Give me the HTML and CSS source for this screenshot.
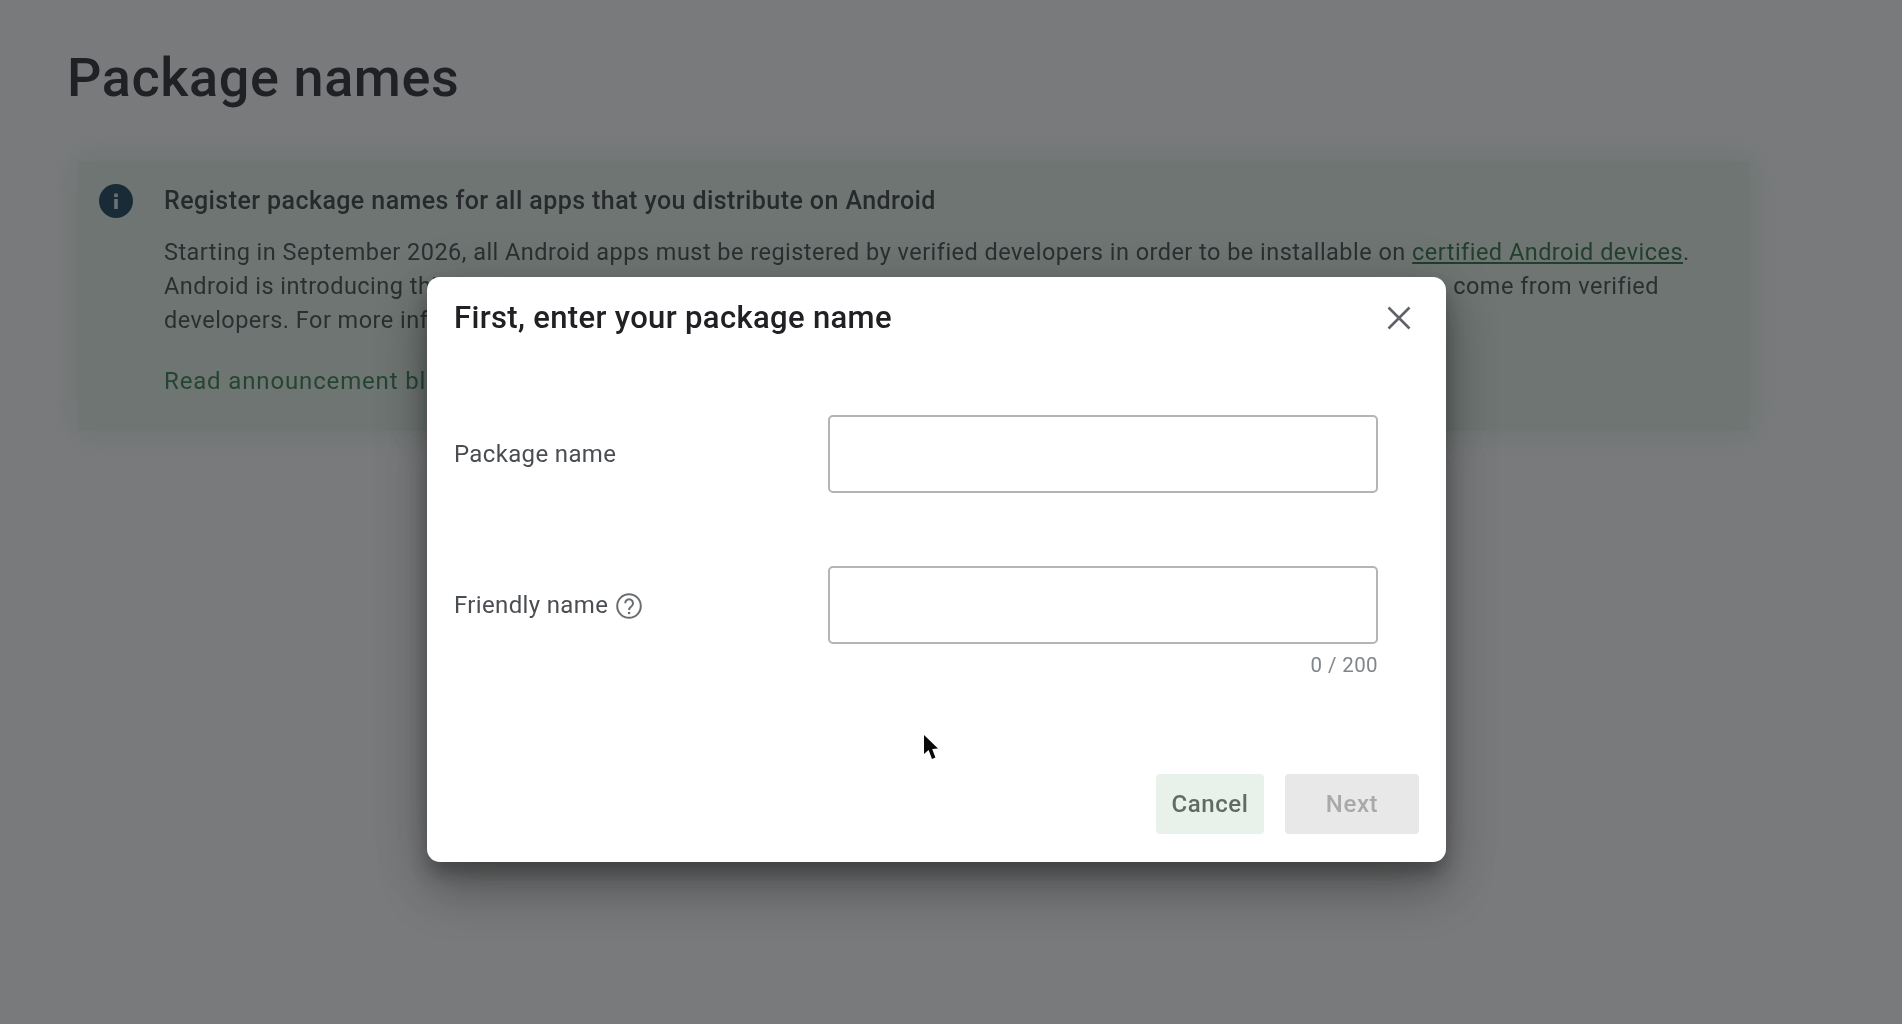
FILE: index.html
```html
<!DOCTYPE html>
<html lang="en">
<head>
<meta charset="utf-8">
<title>Package names</title>
<link rel="stylesheet" href="styles.css">
</head>
<body>
<div class="screen">
  <main class="page">
    <h1 class="page-title">Package names</h1>
    <section class="banner">
      <svg class="banner-icon" viewBox="0 0 34 34" aria-hidden="true">
        <circle cx="17" cy="17" r="17" fill="#0f3a52"/>
        <rect x="15.2" y="15" width="3.6" height="10" fill="#dfe8ea"/>
        <rect x="15.2" y="9.5" width="3.6" height="3.6" fill="#dfe8ea"/>
      </svg>
      <div class="banner-body">
        <h2 class="banner-title">Register package names for all apps that you distribute on Android</h2>
        <p class="banner-text">Starting in September 2026, all Android apps must be registered by verified developers in order to be installable on <a class="banner-link" href="#">certified Android devices</a>.</p>
        <p class="banner-text banner-split"><span>Android is introducing thi</span><span>s come from verified</span></p>
        <p class="banner-text">developers. For more inf</p>
        <a class="banner-action" href="#">Read announcement bl</a>
      </div>
    </section>
  </main>
  <div class="scrim"></div>
  <div class="dialog" role="dialog">
    <header class="dialog-head">
      <h2 class="dialog-title">First, enter your package name</h2>
      <svg class="close-icon" viewBox="0 0 24 24" aria-hidden="true">
        <path d="M1.5 1.5 22.5 22.5M22.5 1.5 1.5 22.5"/>
      </svg>
    </header>
    <div class="form-row form-row-first">
      <label class="field-label">Package name</label>
      <div class="field-input"></div>
    </div>
    <div class="form-row form-row-second">
      <label class="field-label">Friendly name
        <svg class="help-icon" viewBox="0 0 26 26" aria-hidden="true">
          <circle cx="13" cy="13" r="11.8"/>
          <path d="M9.2 10.2a3.9 3.9 0 1 1 6.3 3.1c-1.5 1.1-2.4 1.8-2.4 3.6"/>
          <circle class="help-dot" cx="13.1" cy="20" r="1.3"/>
        </svg>
      </label>
      <div class="field-input"></div>
    </div>
    <div class="counter">0 / 200</div>
    <footer class="dialog-actions">
      <button class="btn btn-cancel">Cancel</button>
      <button class="btn btn-next" disabled>Next</button>
    </footer>
    <svg class="cursor" viewBox="0 0 16 26" aria-hidden="true">
      <path d="M1 1 1 20 5.6 16 9 25 12.4 23.4 9.2 15 15 14.6Z"/>
    </svg>
  </div>
</div>
</body>
</html>
```

FILE: styles.css
```css
* { box-sizing: border-box; }
html, body { margin: 0; height: 100%; }
body { background: #fff; overflow: hidden; font-family: Roboto, "Liberation Sans", sans-serif; }
.screen { position: relative; width: 1902px; height: 1024px; overflow: hidden; filter: blur(0.5px); }
.page { padding: 45px 0 0 67px; color: #202124; }
.page-title { margin: 0; font-size: 54px; line-height: 66px; font-weight: 500; letter-spacing: 0.6px; }
.banner { display: flex; gap: 31px; width: 1671px; height: 270px; margin: 50px 0 0 11px; padding: 23px 0 0 21px; background: #e4f3e6; box-shadow: 0 0 30px 6px #e4f3e6; }
.banner-icon { flex: none; width: 34px; height: 34px; }
.banner-body { flex: 1; }
.banner-title { margin: 0 0 17px; font-size: 25px; line-height: 34px; font-weight: 500; letter-spacing: 0.42px; color: #33363a; }
.banner-text { margin: 0; font-size: 23.5px; line-height: 34px; letter-spacing: 0.47px; color: #3f4347; white-space: nowrap; }
.banner-split { display: flex; justify-content: space-between; width: 1495px; }
.banner-link { color: #25693e; text-decoration: underline; }
.banner-action { display: block; margin-top: 27px; font-size: 24px; line-height: 34px; letter-spacing: 0.85px; font-weight: 400; color: #2f7a4a; text-decoration: none; }
.scrim { position: absolute; inset: 0; background: rgba(32, 33, 36, 0.6); }
.dialog { position: absolute; left: 427px; top: 277px; width: 1019px; height: 585px; background: #fff; border-radius: 13px; padding: 0 27px; box-shadow: 0 30px 50px rgba(0,0,0,.24), 0 12px 18px rgba(0,0,0,.24), 0 8px 60px rgba(0,0,0,.14); }
.dialog-head { display: flex; justify-content: space-between; align-items: center; height: 82px; padding-right: 8px; }
.dialog-title { margin: 0; font-size: 31px; line-height: 36px; font-weight: 500; color: #202124; letter-spacing: 0.35px; }
.close-icon { width: 24px; height: 24px; fill: none; stroke: #5f6368; stroke-width: 2.6; }
.form-row { display: flex; justify-content: space-between; align-items: center; height: 78px; padding-right: 41px; }
.form-row-first { margin-top: 56px; }
.form-row-second { margin-top: 73px; }
.field-label { display: flex; align-items: center; gap: 8px; font-size: 24px; letter-spacing: 0.35px; color: #4a4d51; }
.field-input { width: 550px; height: 78px; border: 2px solid #b3b4b5; border-radius: 5px; background: #fff; }
.help-icon { width: 26px; height: 26px; margin-top: 2px; fill: none; stroke: #6a6d70; stroke-width: 2; }
.help-dot { fill: #6a6d70; stroke: none; }
.counter { margin-top: 8px; height: 26px; padding-right: 41px; text-align: right; font-size: 20.5px; line-height: 26px; letter-spacing: 0.4px; color: #80868b; }
.dialog-actions { display: flex; justify-content: flex-end; gap: 21px; margin-top: 96px; }
.btn { height: 60px; border: 0; border-radius: 4px; font: 500 24px Roboto, sans-serif; letter-spacing: 0.6px; padding: 0; }
.btn-cancel { width: 108px; background: #e8f2eb; color: #5f6b64; }
.btn-next { width: 134px; background: #e8e8e8; color: #a9a9a9; }
.cursor { position: absolute; left: 496px; top: 457px; width: 16px; height: 26px; fill: #0a0a0a; stroke: none; }
```
